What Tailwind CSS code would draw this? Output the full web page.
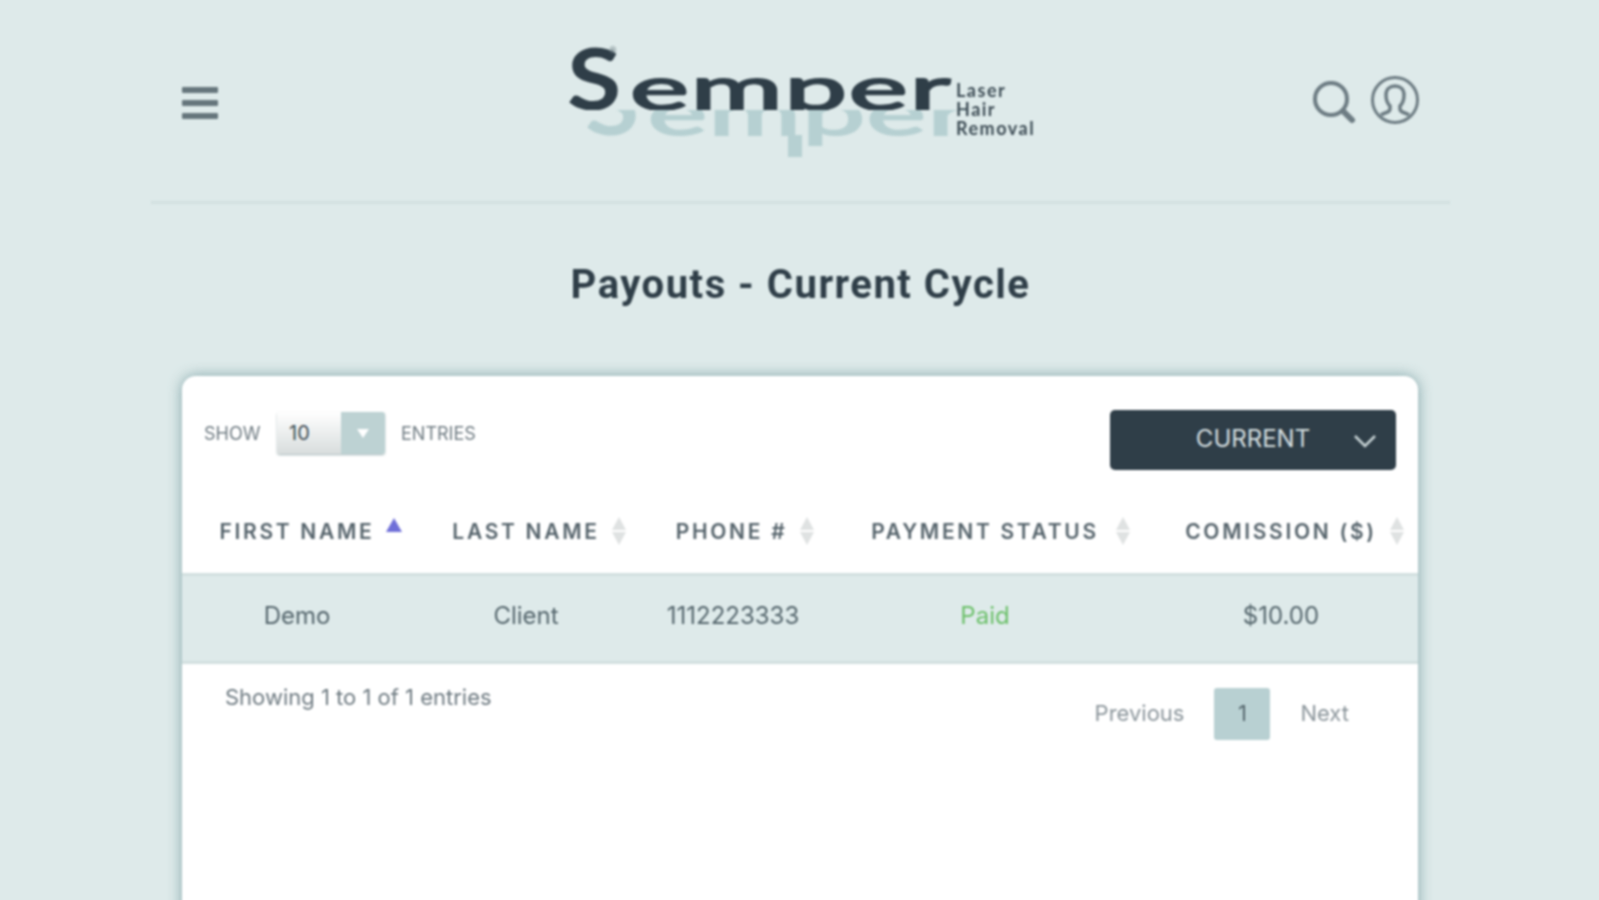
<!DOCTYPE html>
<html lang="en">
    <head>
        <meta charset="UTF-8" />
        <meta name="viewport" content="width=device-width, initial-scale=1.0" />
        <title>Payouts - Current Cycle</title>
        <script src="https://cdn.jsdelivr.net/npm/@tailwindcss/browser@4"></script>
    </head>
    <body class="bg-[#deeaea] h-[900px] overflow-hidden font-['Inter',sans-serif] text-[#2f3e48]">
        <div class="w-[1299px] ml-[151px] blur-[1px]">
            <!-- Header -->
            <header class="h-[204px] border-b-[3px] border-[#d2e0e0] pl-[31px] pr-[30px] flex items-start">
                <button class="mt-[87px] w-[36px] flex flex-col gap-[7px]">
                    <span class="h-[6px] bg-[#66767c] rounded-[1px]"></span>
                    <span class="h-[6px] bg-[#66767c] rounded-[1px]"></span>
                    <span class="h-[6px] bg-[#66767c] rounded-[1px]"></span>
                </button>

                <!-- Logo -->
                <div class="relative mt-[40px] ml-[349px] h-[120px] w-[470px] font-['Lato',sans-serif]">
                    <div class="absolute left-[18px] top-[70px] h-[50px] w-[400px] overflow-hidden text-[#b6d0d2]">
                        <div class="absolute left-0 top-[-51px] flex items-baseline leading-none">
                            <span class="inline-block w-[63px] text-[86px] font-bold origin-left scale-x-[1.15]">S</span>
                            <span class="inline-block w-[318px] text-[60px] tracking-[1px] origin-left scale-x-[1.86] [-webkit-text-stroke:2px_currentColor]">emper</span>
                        </div>
                    </div>
                    <span class="absolute left-[221px] top-[95px] w-[14px] h-[22px] bg-[#b6d0d2]"></span>
                    <div class="relative h-[70px] overflow-hidden">
                        <div class="absolute left-0 top-[-6px] flex items-baseline leading-none">
                            <span class="inline-block w-[63px] text-[86px] font-bold origin-left scale-x-[1.15]">S</span>
                            <span class="inline-block w-[318px] text-[60px] tracking-[1px] origin-left scale-x-[1.86] [-webkit-text-stroke:2px_currentColor]">emper</span>
                        </div>
                    </div>
                    <span class="absolute left-[42px] top-[6px] text-[9px] leading-none text-[#55666d]">®</span>
                    <div class="absolute left-[389px] top-[41px] text-[18px] leading-[19px] font-bold tracking-[1.5px] text-[#3d4c55]">
                        <div>Laser</div>
                        <div>Hair</div>
                        <div>Removal</div>
                    </div>
                </div>

                <div class="mt-[75px] ml-auto flex items-center gap-[13px]">
                    <svg width="46" height="46" viewBox="0 0 46 46" fill="none" class="mt-[3px]">
                        <circle cx="20" cy="20" r="16" stroke="#6d7c83" stroke-width="4" />
                        <path d="M32 32 L41 41" stroke="#6d7c83" stroke-width="6" stroke-linecap="round" />
                    </svg>
                    <svg width="50" height="50" viewBox="0 0 50 50" fill="none">
                        <circle cx="25" cy="25" r="22.5" stroke="#6d7c83" stroke-width="3" />
                        <path d="M11 40 C15 37 20 38 20 34 L20 31 C17 28 16 23 16 20 C16 14 20 11 25 11 C30 11 34 14 34 20 C34 23 33 28 30 31 L30 34 C30 38 35 37 39 40" stroke="#6d7c83" stroke-width="3.5" />
                    </svg>
                </div>
            </header>

            <h1 class="mt-[59px] h-[44px] text-center text-[40px] leading-[44px] font-bold font-['Roboto',sans-serif] tracking-[1.5px] text-[#2f3e48]">
                Payouts - Current Cycle
            </h1>

            <!-- Card -->
            <main class="mt-[69px] ml-[31px] w-[1236px] h-[600px] bg-white rounded-t-[14px] shadow-[0_0_14px_rgba(110,150,155,0.85)]">
                <div class="h-[140px] pt-[34px] pl-[22px] pr-[22px] flex items-start justify-between">
                    <div class="flex items-center mt-[2px] h-[42px] text-[18px] text-[#6f7b82]">
                        <span class="w-[73px]">SHOW</span>
                        <div class="w-[108px] h-[42px] flex rounded-[3px] overflow-hidden shadow-[0_1px_2px_rgba(100,130,135,0.6)]">
                            <div class="w-[64px] pl-[12px] flex items-center bg-gradient-to-b from-white to-[#d8dddd] text-[20px] text-[#3d4c55]">10</div>
                            <div class="flex-1 flex items-center justify-center bg-[#bdd2d3]">
                                <span class="w-0 h-0 border-x-[6px] border-x-transparent border-t-[9px] border-t-white"></span>
                            </div>
                        </div>
                        <span class="ml-[16px]">ENTRIES</span>
                    </div>
                    <button class="relative w-[286px] h-[60px] bg-[#2f3e48] rounded-[5px] text-[#d5dfe0] text-[24px] pb-[3px]">
                        CURRENT
                        <svg width="24" height="14" viewBox="0 0 24 14" fill="none" class="absolute right-[19px] top-[24px]">
                            <path d="M2 2 L12 12 L22 2" stroke="#c8d4d6" stroke-width="2.5" />
                        </svg>
                    </button>
                </div>

                <table class="w-full table-fixed text-center">
                    <colgroup>
                        <col class="w-[230px]" />
                        <col class="w-[228px]" />
                        <col class="w-[186px]" />
                        <col class="w-[318px]" />
                        <col class="w-[274px]" />
                    </colgroup>
                    <thead>
                        <tr class="text-[21px] tracking-[2.7px] text-[#55636b]">
                            <th class="relative pb-[25px] font-semibold">
                                FIRST NAME
                                <span class="absolute right-[10px] top-[2px] w-0 h-0 border-x-[8px] border-x-transparent border-b-[14px] border-b-[#6f6fd8]"></span>
                            </th>
                            <th class="relative pb-[25px] font-semibold">
                                LAST NAME
                                <span class="absolute right-[14px] top-[1px] flex flex-col gap-[2px]">
                                    <span class="w-0 h-0 border-x-[7px] border-x-transparent border-b-[13px] border-b-[#dfe2e2]"></span>
                                    <span class="w-0 h-0 border-x-[7px] border-x-transparent border-t-[13px] border-t-[#dfe2e2]"></span>
                                </span>
                            </th>
                            <th class="relative pb-[25px] pr-[3px] font-semibold">
                                PHONE #
                                <span class="absolute right-[12px] top-[1px] flex flex-col gap-[2px]">
                                    <span class="w-0 h-0 border-x-[7px] border-x-transparent border-b-[13px] border-b-[#dfe2e2]"></span>
                                    <span class="w-0 h-0 border-x-[7px] border-x-transparent border-t-[13px] border-t-[#dfe2e2]"></span>
                                </span>
                            </th>
                            <th class="relative pb-[25px] font-semibold">
                                PAYMENT STATUS
                                <span class="absolute right-[14px] top-[1px] flex flex-col gap-[2px]">
                                    <span class="w-0 h-0 border-x-[7px] border-x-transparent border-b-[13px] border-b-[#dfe2e2]"></span>
                                    <span class="w-0 h-0 border-x-[7px] border-x-transparent border-t-[13px] border-t-[#dfe2e2]"></span>
                                </span>
                            </th>
                            <th class="relative pb-[25px] font-semibold">
                                COMISSION ($)
                                <span class="absolute right-[14px] top-[1px] flex flex-col gap-[2px]">
                                    <span class="w-0 h-0 border-x-[7px] border-x-transparent border-b-[13px] border-b-[#dfe2e2]"></span>
                                    <span class="w-0 h-0 border-x-[7px] border-x-transparent border-t-[13px] border-t-[#dfe2e2]"></span>
                                </span>
                            </th>
                        </tr>
                    </thead>
                    <tbody>
                        <tr class="h-[88px] bg-[#deeaea] border-y-[3px] border-[#d2e0e0] text-[24px] text-[#55666d]">
                            <td class="pb-[4px]">Demo</td>
                            <td class="pb-[4px]">Client</td>
                            <td class="pb-[4px]">1112223333</td>
                            <td class="pb-[4px] text-[#6cc06a]">Paid</td>
                            <td class="pb-[4px]">$10.00</td>
                        </tr>
                    </tbody>
                </table>

                <div class="flex items-start justify-between pl-[43px] pr-[69px]">
                    <p class="mt-[19px] text-[22px] leading-[28px] text-[#6f7b82]">Showing 1 to 1 of 1 entries</p>
                    <div class="mt-[24px] flex items-center text-[22px] text-[#8b959b]">
                        <span>Previous</span>
                        <span class="mx-[30px] w-[56px] h-[52px] flex items-center justify-center bg-[#b8d0d2] rounded-[3px] text-[#55666d]">1</span>
                        <span>Next</span>
                    </div>
                </div>
            </main>
        </div>
    </body>
</html>
